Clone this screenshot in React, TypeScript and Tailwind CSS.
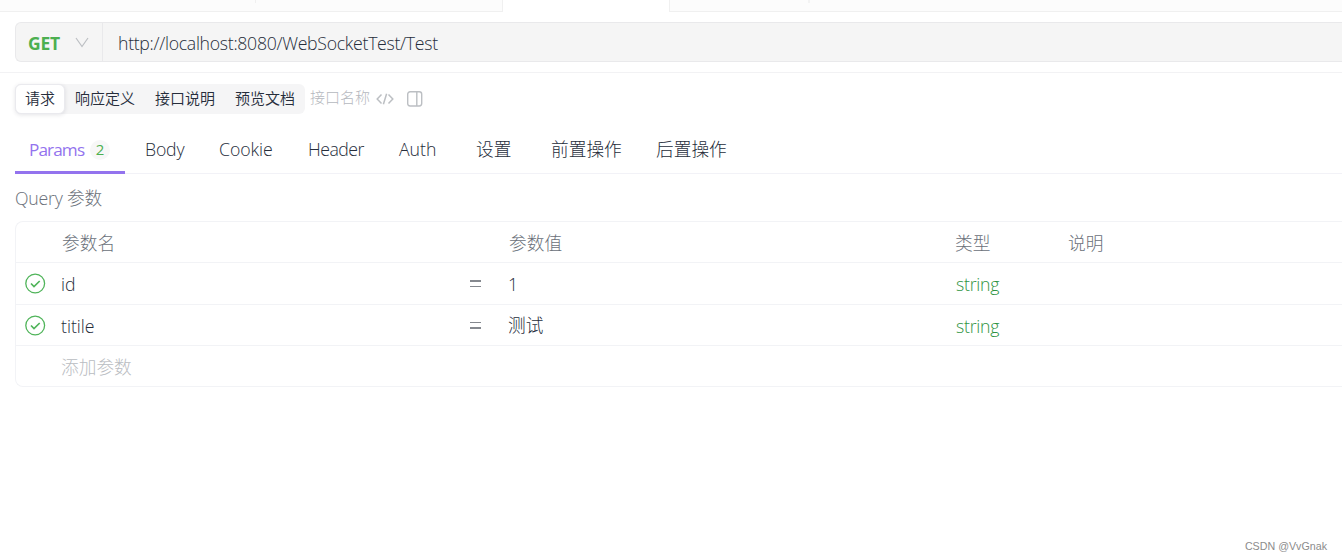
import React from "react";
import clsx from "clsx";

type Param = { name: string; value: string; type: string };

const params: Param[] = [
  { name: "id", value: "1", type: "string" },
  { name: "titile", value: "测试", type: "string" },
];

const views = [
  { label: "请求", width: "w-[50px]" },
  { label: "响应定义", width: "w-20" },
  { label: "接口说明", width: "w-20" },
  { label: "预览文档", width: "w-20" },
];

const tabs = [
  { label: "Body", width: "w-[39px]", text: "tracking-[-0.2px]" },
  { label: "Cookie", width: "w-[54px]", text: "tracking-[-0.05px]" },
  { label: "Header", width: "w-[56px]", text: "tracking-[-0.5px]" },
  { label: "Auth", width: "w-[42px]", text: "" },
  { label: "设置", width: "w-10", text: "" },
  { label: "前置操作", width: "w-[70px]", text: "" },
  { label: "后置操作", width: "w-[72px]", text: "" },
];

const App = () => (
  <div className="flex h-[560px] w-full flex-col overflow-hidden bg-white font-['Open_Sans','Noto_Sans_CJK_SC',sans-serif] text-[17.7px] font-light text-[#262d3b]">
    <WindowTabs />
    <UrlBar />

    <div className="flex flex-col pl-[15px] pt-[11px]">
      <ViewSwitch />
      <RequestTabs />

      <div className="flex h-[47px] items-center pt-px text-[#6a7079]">
        <span className="tracking-[-0.2px]">Query 参数</span>
      </div>

      <ParamsTable />
    </div>

    <div className="mt-auto flex justify-end pb-[5px] pr-[15px] font-['Liberation_Sans',sans-serif] text-[10.7px] font-normal leading-[17px] text-[#8c8c8c]">
      CSDN @VvGnak
    </div>
  </div>
);

export default App;

const WindowTabs = () => (
  <div className="flex h-3 shrink-0">
    <div className="flex w-[503px] border-b border-r border-[#f0f0f0] bg-[#fcfcfc] pl-[255px]">
      <div className="h-[3px] w-px bg-[#f0f0f0]" />
    </div>
    <div className="w-[166px]" />
    <div className="flex flex-1 border-b border-l border-[#f0f0f0] bg-[#fcfcfc] pl-[138px]">
      <div className="h-[3px] w-0.5 bg-[#f3f3f3]" />
    </div>
  </div>
);

const UrlBar = () => (
  <div className="shrink-0 border-b border-[#f2f2f4] py-2.5 pl-[15px]">
    <div className="flex h-10 rounded-l-md border border-r-0 border-[#e9e9eb] bg-[#f5f5f5]">
      <div className="flex w-[87px] items-center border-r border-[#e9e9eb] pl-3">
        <span className="w-[33px] whitespace-nowrap pt-[3px] text-[17.5px] font-bold tracking-[-0.2px] text-[#4caf50]">
          GET
        </span>
        <svg
          className="ml-3.5"
          width="14"
          height="11"
          viewBox="0 0 14 11"
          fill="none"
          stroke="#bcbfc3"
          strokeWidth="1.2"
        >
          <path d="M1 1l6 8.5L13 1" />
        </svg>
      </div>
      <div className="flex items-center pl-[15px] pt-[3px] tracking-[-0.3px]">
        http://localhost:8080/WebSocketTest/Test
      </div>
    </div>
  </div>
);

const ViewSwitch = () => (
  <div className="flex h-[30px] items-center text-[15px]">
    <div className="flex h-[30px] rounded-md bg-[#f5f5f6] font-[350]">
      {views.map(({ label, width }, i) => (
        <div
          key={label}
          className={clsx(
            "flex items-center justify-center whitespace-nowrap pb-0.5",
            width,
            i === 0 &&
              "rounded-md border border-[#eaeaee] bg-white shadow-[0_1px_4px_rgba(30,30,60,0.12)]",
          )}
        >
          {label}
        </div>
      ))}
    </div>
    <span className="ml-[5px] pb-[3px] text-[#b5b8be]">接口名称</span>
    <svg
      className="-mt-px ml-1.5"
      width="18"
      height="12"
      viewBox="0 0 18 12"
      fill="none"
      stroke="#bcbfc3"
      strokeWidth="1.5"
    >
      <path d="M5.5 1.5L1.2 6l4.3 4.5M12.5 1.5L16.8 6l-4.3 4.5M10.6 0.8L7.4 11.2" />
    </svg>
    <svg
      className="-mt-px ml-3"
      width="18"
      height="16"
      viewBox="0 0 18 16"
      fill="none"
      stroke="#bcbfc3"
      strokeWidth="1.4"
    >
      <rect x="1.7" y="0.8" width="14" height="14.2" rx="2.4" />
      <path d="M10.8 1v14" />
    </svg>
  </div>
);

const RequestTabs = () => (
  <div className="flex h-[60px] items-end border-b border-[#f2f2f7]">
    <div className="-mb-px flex h-12 w-[110px] items-center border-b-[3px] border-[#9373ee] pl-3.5 pt-0.5 text-[#9373ee]">
      <span className="w-[57px] whitespace-nowrap text-[17.2px] font-normal tracking-[-0.9px]">
        Params
      </span>
      <span className="ml-[4px] flex size-5 items-center justify-center rounded-full bg-[#f7f7f7] text-[15px] font-normal text-[#4caf50]">
        2
      </span>
    </div>
    <div className="flex h-12 items-center gap-[35px] pl-5">
      {tabs.map(({ label, width, text }) => (
        <span key={label} className={clsx("whitespace-nowrap", width, text)}>
          {label}
        </span>
      ))}
    </div>
  </div>
);

const ParamsTable = () => (
  <div className="flex flex-col rounded-l-lg border border-r-0 border-[#f2f3f6]">
    <div className="flex h-[41px] items-center border-b border-[#f2f3f6] pl-[46px] pt-0.5 text-[#6a7079]">
      <span className="w-[447px]">参数名</span>
      <span className="w-[446px]">参数值</span>
      <span className="w-[113px]">类型</span>
      <span>说明</span>
    </div>

    {params.map((param, i) => (
      <div
        key={param.name}
        className={clsx(
          "flex items-center border-b border-[#f2f3f6] pl-[9px]",
          i === 0 ? "h-[42px]" : "h-[41px]",
        )}
      >
        <CheckCircle />
        <span className="ml-[15px] w-[409px] pt-0.5">{param.name}</span>
        <span className="flex w-[38px] flex-col gap-1">
          <span className="h-[1.5px] w-[11px] bg-[#85898f]" />
          <span className="h-[1.5px] w-[11px] bg-[#85898f]" />
        </span>
        <span className="w-[448px] pt-px">{param.value}</span>
        <span className="pt-0.5 tracking-[-0.25px] text-[#2f9443]">
          {param.type}
        </span>
      </div>
    ))}

    <div className="flex h-10 items-center pl-[45px] pt-[3px] text-[#b9bcc1]">
      添加参数
    </div>
  </div>
);

const CheckCircle = () => (
  <svg
    width="21"
    height="21"
    viewBox="0 0 21 21"
    fill="none"
    stroke="#50b45a"
    strokeWidth="1.3"
  >
    <circle cx="10.2" cy="10.5" r="9.4" />
    <path d="M6 10.5l3 3L14.7 8" strokeWidth="1.7" />
  </svg>
);
